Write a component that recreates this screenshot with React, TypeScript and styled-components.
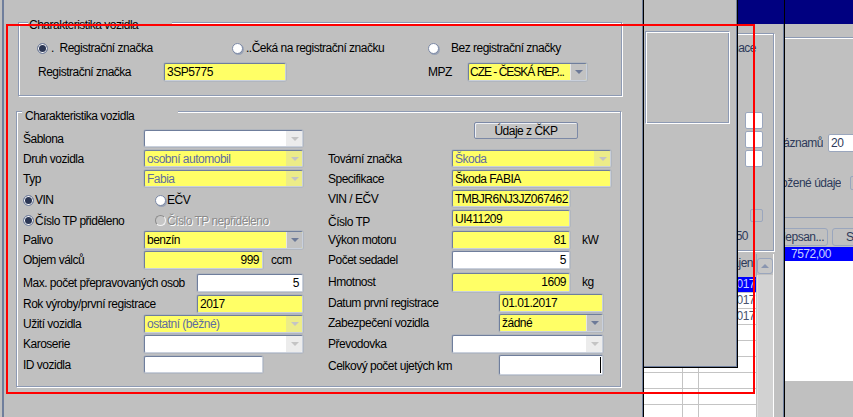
import React from "react";
import styled, { createGlobalStyle } from "styled-components";

const YELLOW = "#ffff66";
const EDGE = "#6f7e9c";
const NAVY = "#000080";

const GlobalStyle = createGlobalStyle`
  * { box-sizing: border-box; }
  html, body {
    margin: 0;
    padding: 0;
    background: #c0c0c0;
  }
  body {
    width: 853px;
    height: 417px;
    overflow: hidden;
    font-family: "Liberation Sans", Arial, sans-serif;
    font-size: 12px;
    letter-spacing: -0.5px;
    color: #000;
  }
`;

const Desktop = styled.div`
  position: relative;
  display: flex;
  width: 853px;
  height: 417px;
  overflow: hidden;
  background: #c0c0c0;
`;

/* ---------- main dialog ---------- */

const MainDialog = styled.div`
  flex: none;
  width: 644px;
  height: 100%;
  padding: 22px 0 0 16px;
  border-left: 2px solid #c0c0c0;
  border-right: 1px solid #000;
  box-shadow: inset 2px 0 0 ${EDGE}, inset -1px 0 0 ${EDGE};
`;

const Frame = styled.section<{ $w: number; $h: number; $ml?: number; $mt?: number }>`
  position: relative;
  width: ${(p) => p.$w}px;
  height: ${(p) => p.$h}px;
  margin-left: ${(p) => p.$ml ?? 0}px;
  margin-top: ${(p) => p.$mt ?? 0}px;
  border: 1px solid #8d9ab4;
  box-shadow: inset 1px 1px 0 #fff, 1px 1px 0 #fff;
`;

const Legend = styled.span<{ $left: number; $top: number; $w: number; $pad: number }>`
  position: absolute;
  left: ${(p) => p.$left}px;
  top: ${(p) => p.$top}px;
  width: ${(p) => p.$w}px;
  padding-left: ${(p) => p.$pad}px;
  line-height: 14px;
  background: #c0c0c0;
  white-space: nowrap;
`;

const PlateBody = styled.div`
  display: flex;
  flex-direction: column;
  padding: 18px 0 0 18px;
`;

const Line = styled.div<{ $h: number; $mt?: number }>`
  display: flex;
  align-items: center;
  height: ${(p) => p.$h}px;
  margin-top: ${(p) => p.$mt ?? 0}px;
`;

const RadioOption = styled.label<{ $w?: number; $gap: number; $disabled?: boolean }>`
  flex: none;
  display: flex;
  align-items: center;
  gap: ${(p) => p.$gap}px;
  width: ${(p) => (p.$w ? `${p.$w}px` : "auto")};
  white-space: pre;
  color: ${(p) => (p.$disabled ? "#8a8a8a" : "#000")};
  text-shadow: ${(p) => (p.$disabled ? "1px 1px 0 #fff" : "none")};
`;

const RadioDot = styled.span<{ $checked?: boolean; $disabled?: boolean }>`
  flex: none;
  width: 11px;
  height: 11px;
  border-radius: 50%;
  border: 1px solid;
  border-color: ${(p) =>
    p.$disabled ? "#8c8c8c #f4f4f4 #f4f4f4 #8c8c8c" : "#7c89a6"};
  background: ${(p) => (p.$checked ? "#2b3654" : p.$disabled ? "#c6c6c6" : "#fff")};
  box-shadow: ${(p) =>
    p.$checked ? "inset 0 0 0 1px #fff" : p.$disabled ? "none" : "1px 1px 0 #9aa3b5"};
`;

const Label = styled.span<{ $w: number; $pl?: number; $ml?: number; $self?: string }>`
  flex: none;
  width: ${(p) => p.$w}px;
  padding-left: ${(p) => p.$pl ?? 0}px;
  margin-left: ${(p) => p.$ml ?? 0}px;
  line-height: 18px;
  white-space: nowrap;
  align-self: ${(p) => p.$self ?? "auto"};
`;

const Unit = styled.span<{ $gap: number }>`
  margin-left: ${(p) => p.$gap}px;
  line-height: 18px;
`;

const FieldBox = styled.div<{ $w: number; $h?: number; $tone?: "yellow" | "white"; $ml?: number }>`
  flex: none;
  display: flex;
  align-items: stretch;
  width: ${(p) => p.$w}px;
  height: ${(p) => p.$h ?? 18}px;
  margin-left: ${(p) => p.$ml ?? 0}px;
  border: 1px solid;
  border-color: #6f7e9c #c9d0dc #c9d0dc #6f7e9c;
  border-radius: 2px;
  box-shadow: 0 0 0 1px rgba(150, 162, 186, 0.35);
  background: ${(p) => (p.$tone === "yellow" ? YELLOW : "#fff")};
  overflow: hidden;
`;

const FieldText = styled.span<{ $align?: "left" | "right"; $muted?: boolean; $tight?: boolean }>`
  flex: 1;
  min-width: 0;
  padding: 0 3px 0 ${(p) => (p.$tight ? 1 : 2)}px;
  line-height: 16px;
  letter-spacing: ${(p) => (p.$tight ? "-1px" : "inherit")};
  text-align: ${(p) => p.$align ?? "left"};
  color: ${(p) => (p.$muted ? "#5f6da0" : "#000")};
  white-space: nowrap;
  overflow: hidden;
`;

const Caret = styled.span`
  flex: none;
  width: 1px;
  margin: 1px 1px 1px 0;
  background: #000;
`;

const DropButton = styled.span<{ $disabled?: boolean }>`
  flex: none;
  width: 16px;
  display: flex;
  align-items: center;
  justify-content: center;
  background: ${(p) => (p.$disabled ? "rgba(200,200,200,0.35)" : "#c2c2c2")};
  border-left: 1px solid ${(p) => (p.$disabled ? "transparent" : "#e6e6e6")};

  &::after {
    content: "";
    border-left: 4px solid transparent;
    border-right: 4px solid transparent;
    border-top: 4px solid ${(p) => (p.$disabled ? "#c4c4c4" : "#6d7a98")};
  }
`;

type FieldProps = {
  w: number;
  value?: string;
  tone?: "yellow" | "white";
  align?: "left" | "right";
  h?: number;
  ml?: number;
  caret?: boolean;
  tight?: boolean;
};

const TextField = ({ w, value = "", tone = "white", align, h, ml, caret }: FieldProps) => (
  <FieldBox $w={w} $tone={tone} $h={h} $ml={ml}>
    <FieldText $align={align}>{value}</FieldText>
    {caret && <Caret />}
  </FieldBox>
);

const Combo = ({
  w,
  value = "",
  tone = "white",
  disabled,
  h,
  tight,
}: FieldProps & { disabled?: boolean }) => (
  <FieldBox $w={w} $tone={tone} $h={h}>
    <FieldText $muted={disabled} $tight={tight}>
      {value}
    </FieldText>
    <DropButton $disabled={disabled} />
  </FieldBox>
);

const FormBody = styled.div`
  display: flex;
  padding-left: 6px;
`;

const Column = styled.div<{ $w?: number; $pt: number }>`
  display: flex;
  flex-direction: column;
  flex: ${(p) => (p.$w ? "none" : "1")};
  width: ${(p) => (p.$w ? `${p.$w}px` : "auto")};
  padding-top: ${(p) => p.$pt}px;
`;

const Row = styled.div<{ $h: number }>`
  display: flex;
  align-items: flex-start;
  height: ${(p) => p.$h}px;
`;

const RadioRow = styled.div<{ $h: number }>`
  display: flex;
  align-items: center;
  height: ${(p) => p.$h}px;
`;

const ButtonRow = styled.div`
  height: 28px;
  padding-left: 146px;
`;

const PushButton = styled.button`
  width: 104px;
  height: 17px;
  padding: 0;
  font: inherit;
  letter-spacing: inherit;
  line-height: 14px;
  color: #000;
  background: #c4c4c4;
  border: 1px solid #7c89a6;
  border-radius: 2px;
  box-shadow: inset 1px 1px 0 #eef0f4;
`;

/* ---------- windows behind ---------- */

const BackWindow = styled.div`
  position: relative;
  flex: none;
  width: 141px;
  height: 100%;
  display: flex;
  flex-direction: column;
  border-right: 1px solid #000;
  box-shadow: inset -1px 0 0 ${EDGE};
`;

const TitleBar = styled.div`
  flex: none;
  height: 24px;
  background: ${NAVY};
`;

const BackBody = styled.div`
  display: flex;
  flex-direction: column;
  padding-left: 10px;
`;

const SideFrame = styled.div`
  width: 120px;
  height: 218px;
  margin-top: 9px;
  display: flex;
  flex-direction: column;
  align-items: flex-end;
  border: 1px solid #8d9ab4;
  box-shadow: inset 1px 1px 0 #fff, 1px 1px 0 #fff;
`;

const DimText = styled.span<{ $mt: number; $mr: number }>`
  margin-top: ${(p) => p.$mt}px;
  margin-right: ${(p) => p.$mr}px;
  line-height: 14px;
  color: #2e3a5a;
  white-space: nowrap;
`;

const SmallBox = styled.span<{ $w: number; $h: number; $mt: number; $mr: number; $tone?: string }>`
  width: ${(p) => p.$w}px;
  height: ${(p) => p.$h}px;
  margin-top: ${(p) => p.$mt}px;
  margin-right: ${(p) => p.$mr}px;
  background: ${(p) => p.$tone ?? "#fff"};
  border: 1px solid #9aa6bd;
  border-radius: 2px;
`;

const TableWrap = styled.div`
  display: flex;
  margin-top: 3px;
  margin-left: -10px;
  flex: 1;
`;

const Grid = styled.div`
  width: 113px;
  display: flex;
  flex-direction: column;
`;

const GridHead = styled.div`
  height: 23px;
  display: flex;
  align-items: center;
  justify-content: flex-end;
  padding: 0 3px 3px 0;
  border-bottom: 2px solid #c0c0c0;
  border-right: 1px solid #9aa6bd;
  color: #2e3a5a;
`;

const GridBody = styled.div`
  flex: 1;
  background: #fff;
`;

const GridRow = styled.div<{ $selected?: boolean }>`
  display: grid;
  grid-template-columns: 39px 16px 58px;
  height: 16px;
  background: ${(p) => (p.$selected ? "#0000ff" : "transparent")};
  color: ${(p) => (p.$selected ? "#c8d2ff" : "#4a5570")};
`;

const GridCell = styled.span<{ $align?: string }>`
  border-right: 1px solid #c4c4c4;
  border-bottom: 1px solid #c4c4c4;
  line-height: 15px;
  text-align: ${(p) => p.$align ?? "left"};
  padding-right: 1px;
  white-space: nowrap;
  overflow: hidden;
`;

const ScrollBar = styled.div`
  width: 17px;
  display: flex;
  flex-direction: column;
  padding-top: 4px;
  border-right: 1px solid #fff;
`;

const ScrollUp = styled.span`
  flex: none;
  height: 16px;
  display: flex;
  align-items: center;
  justify-content: center;
  border: 1px solid #9aa6bd;
  border-radius: 3px;
  background: #c6c6c6;

  &::after {
    content: "";
    border-left: 4px solid transparent;
    border-right: 4px solid transparent;
    border-bottom: 4px solid #8a96b0;
  }
`;

const ScrollTrack = styled.span`
  flex: 1;
  margin-top: 1px;
  background: #d2d2d2;
  border-left: 1px solid #e0e0e0;
`;

const FloatPanel = styled.div`
  position: absolute;
  left: 0;
  top: 0;
  width: 94px;
  height: 368px;
  padding: 31px 0 0 1px;
  background: #c0c0c0;
  border-right: 1px solid #000;
  border-bottom: 1px solid #000;
  box-shadow: inset -1px -1px 0 ${EDGE};
`;

const EtchedBox = styled.div`
  width: 85px;
  height: 93px;
  border: 1px solid #8d9ab4;
  border-color: #8d9ab4 #fff #fff #8d9ab4;
  box-shadow: inset 1px 1px 0 #fff, inset -1px -1px 0 #8d9ab4;
`;

const RightWindow = styled.div`
  flex: 1;
  display: flex;
  flex-direction: column;
  min-width: 0;
`;

const RightBody = styled.div`
  flex: 1;
  display: flex;
  flex-direction: column;
  overflow: hidden;
`;

const TopRule = styled.div`
  margin-top: 13px;
  height: 181px;
  border-top: 1px solid #8d9ab4;
  box-shadow: inset 0 1px 0 #fff;
  border-bottom: 1px solid #8d9ab4;
  display: flex;
  flex-direction: column;
`;

const ClipLine = styled.div<{ $mt: number }>`
  display: flex;
  align-items: center;
  height: 18px;
  margin-top: ${(p) => p.$mt}px;
  white-space: nowrap;
`;

const ClipLabel = styled.span<{ $w: number }>`
  flex: none;
  width: ${(p) => p.$w}px;
  display: flex;
  justify-content: flex-end;
  overflow: hidden;
  color: #2e3a5a;
  line-height: 18px;
`;

const MiniInput = styled.span<{ $ml: number }>`
  flex: none;
  width: 60px;
  height: 18px;
  margin-left: ${(p) => p.$ml}px;
  padding-left: 2px;
  line-height: 16px;
  background: #fff;
  color: #2e3a5a;
  border: 1px solid #9aa6bd;
  border-radius: 2px;
`;

const MiniCheck = styled.span<{ $ml: number }>`
  flex: none;
  width: 14px;
  height: 14px;
  margin-left: ${(p) => p.$ml}px;
  border: 1px solid #9aa6bd;
  border-radius: 2px;
`;

const TabStrip = styled.div`
  display: flex;
  gap: 4px;
  height: 18px;
  margin-top: 10px;
  white-space: nowrap;
`;

const TabClip = styled.div`
  flex: none;
  width: 43px;
  display: flex;
  justify-content: flex-end;
  overflow: hidden;
`;

const TabButton = styled.span<{ $w: number; $align: "left" | "right"; $pl: number }>`
  flex: none;
  width: ${(p) => p.$w}px;
  height: 18px;
  padding: 0 3px 0 ${(p) => p.$pl}px;
  line-height: 16px;
  text-align: ${(p) => p.$align};
  color: #2e3a5a;
  border: 1px solid #9aa6bd;
  border-radius: 3px;
  overflow: hidden;
`;

const ResultTable = styled.div`
  height: 134px;
  margin-top: 1px;
  background: #fff;
`;

const SelectedRow = styled.div`
  height: 14px;
  padding-left: 6px;
  line-height: 14px;
  background: #0000ff;
  color: #c8d2ff;
`;

const Annotation = styled.div`
  position: absolute;
  left: 6px;
  top: 24px;
  width: 749px;
  height: 370px;
  border: 2px solid #ff0000;
  pointer-events: none;
`;

export default function App() {
  return (
    <>
      <GlobalStyle />
      <Desktop>
        <MainDialog>
          <Frame $w={604} $h={74}>
            <Legend $left={9} $top={-5} $w={144} $pad={1}>
              Charakteristika vozidla
            </Legend>
            <PlateBody>
              <Line $h={14}>
                <RadioOption $w={195} $gap={3}>
                  <RadioDot $checked />
                  {".  Registrační značka"}
                </RadioOption>
                <RadioOption $w={196} $gap={3}>
                  <RadioDot />
                  ..Čeká na registrační značku
                </RadioOption>
                <RadioOption $gap={12}>
                  <RadioDot />
                  Bez registrační značky
                </RadioOption>
              </Line>
              <Line $h={18} $mt={8}>
                <Label $w={127} $pl={1}>
                  Registrační značka
                </Label>
                <TextField w={122} tone="yellow" value="3SP5775" />
                <Label $w={40} $ml={142}>
                  MPZ
                </Label>
                <Combo w={119} tone="yellow" value="CZE - ČESKÁ REP..." tight />
              </Line>
            </PlateBody>
          </Frame>

          <Frame $w={605} $h={276} $ml={-2} $mt={15}>
            <Legend $left={5} $top={-3} $w={156} $pad={3}>
              Charakteristika vozidla
            </Legend>
            <FormBody>
              <Column $w={305} $pt={18}>
                <Row $h={20}>
                  <Label $w={121}>Šablona</Label>
                  <Combo w={159} h={17} disabled />
                </Row>
                <Row $h={20}>
                  <Label $w={121}>Druh vozidla</Label>
                  <Combo w={159} h={17} tone="yellow" value="osobní automobil" disabled />
                </Row>
                <Row $h={20}>
                  <Label $w={121}>Typ</Label>
                  <Combo w={159} h={17} tone="yellow" value="Fabia" disabled />
                </Row>
                <RadioRow $h={20}>
                  <RadioOption $w={132} $gap={1}>
                    <RadioDot $checked />
                    VIN
                  </RadioOption>
                  <RadioOption $gap={1}>
                    <RadioDot />
                    EČV
                  </RadioOption>
                </RadioRow>
                <RadioRow $h={21}>
                  <RadioOption $w={132} $gap={1}>
                    <RadioDot $checked />
                    Číslo TP přiděleno
                  </RadioOption>
                  <RadioOption $gap={1} $disabled>
                    <RadioDot $disabled />
                    Číslo TP nepřiděleno
                  </RadioOption>
                </RadioRow>
                <Row $h={20}>
                  <Label $w={121}>Palivo</Label>
                  <Combo w={159} tone="yellow" value="benzín" />
                </Row>
                <Row $h={23}>
                  <Label $w={121}>Objem válců</Label>
                  <TextField w={119} tone="yellow" align="right" value="999" />
                  <Unit $gap={8}>ccm</Unit>
                </Row>
                <Row $h={21}>
                  <Label $w={174}>Max. počet přepravovaných osob</Label>
                  <TextField w={106} align="right" value="5" />
                </Row>
                <Row $h={20}>
                  <Label $w={174}>Rok výroby/první registrace</Label>
                  <TextField w={106} tone="yellow" value="2017" />
                </Row>
                <Row $h={20}>
                  <Label $w={121}>Užití vozidla</Label>
                  <Combo w={159} tone="yellow" value="ostatní (běžné)" disabled />
                </Row>
                <Row $h={21}>
                  <Label $w={121}>Karoserie</Label>
                  <Combo w={159} disabled />
                </Row>
                <Row $h={20}>
                  <Label $w={121}>ID vozidla</Label>
                  <TextField w={119} h={17} />
                </Row>
              </Column>

              <Column $pt={10}>
                <ButtonRow>
                  <PushButton type="button">Údaje z ČKP</PushButton>
                </ButtonRow>
                <Row $h={20}>
                  <Label $w={124}>Tovární značka</Label>
                  <Combo w={159} h={17} tone="yellow" value="Škoda" disabled />
                </Row>
                <Row $h={20}>
                  <Label $w={124}>Specifikace</Label>
                  <TextField w={159} h={17} tone="yellow" value="Škoda FABIA" />
                </Row>
                <Row $h={20}>
                  <Label $w={124}>VIN / EČV</Label>
                  <TextField w={118} h={17} tone="yellow" value="TMBJR6NJ3JZ067462" />
                </Row>
                <Row $h={21}>
                  <Label $w={124} $self="flex-end">
                    Číslo TP
                  </Label>
                  <TextField w={118} h={17} tone="yellow" value="UI411209" />
                </Row>
                <Row $h={20}>
                  <Label $w={124}>Výkon motoru</Label>
                  <TextField w={118} tone="yellow" align="right" value="81" />
                  <Unit $gap={12}>kW</Unit>
                </Row>
                <Row $h={22}>
                  <Label $w={124}>Počet sedadel</Label>
                  <TextField w={118} align="right" value="5" />
                </Row>
                <Row $h={21}>
                  <Label $w={124}>Hmotnost</Label>
                  <TextField w={118} h={19} tone="yellow" align="right" value="1609" />
                  <Unit $gap={12}>kg</Unit>
                </Row>
                <Row $h={20}>
                  <Label $w={171}>Datum první registrace</Label>
                  <TextField w={104} tone="yellow" value="01.01.2017" />
                </Row>
                <Row $h={21}>
                  <Label $w={171}>Zabezpečení vozidla</Label>
                  <Combo w={104} tone="yellow" value="žádné" />
                </Row>
                <Row $h={20}>
                  <Label $w={124}>Převodovka</Label>
                  <Combo w={151} disabled />
                </Row>
                <Row $h={20}>
                  <Label $w={171} $self="flex-end">
                    Celkový počet ujetých km
                  </Label>
                  <TextField w={104} h={20} caret />
                </Row>
              </Column>
            </FormBody>
          </Frame>
        </MainDialog>

        <BackWindow>
          <TitleBar />
          <BackBody>
            <SideFrame>
              <DimText $mt={7} $mr={17}>
                Informace
              </DimText>
              <SmallBox $w={18} $h={17} $mt={57} $mr={10} />
              <SmallBox $w={18} $h={17} $mt={2} $mr={10} />
              <SmallBox $w={18} $h={17} $mt={2} $mr={10} />
              <SmallBox $w={13} $h={13} $mt={42} $mr={10} $tone="transparent" />
              <DimText $mt={7} $mr={25}>
                150
              </DimText>
            </SideFrame>
            <TableWrap>
              <Grid>
                <GridHead>Zahájen</GridHead>
                <GridBody>
                  <GridRow $selected>
                    <GridCell />
                    <GridCell />
                    <GridCell $align="right">01.01.2017</GridCell>
                  </GridRow>
                  <GridRow>
                    <GridCell />
                    <GridCell />
                    <GridCell $align="right">01.01.2017</GridCell>
                  </GridRow>
                  <GridRow>
                    <GridCell />
                    <GridCell />
                    <GridCell $align="right">01.01.2017</GridCell>
                  </GridRow>
                  {Array.from({ length: 7 }, (_, i) => (
                    <GridRow key={i}>
                      <GridCell />
                      <GridCell />
                      <GridCell />
                    </GridRow>
                  ))}
                </GridBody>
              </Grid>
              <ScrollBar>
                <ScrollUp />
                <ScrollTrack />
              </ScrollBar>
            </TableWrap>
          </BackBody>
          <FloatPanel>
            <EtchedBox />
          </FloatPanel>
        </BackWindow>

        <RightWindow>
          <TitleBar />
          <RightBody>
            <TopRule>
              <ClipLine $mt={96}>
                <ClipLabel $w={38}>Počet záznamů</ClipLabel>
                <MiniInput $ml={5}>20</MiniInput>
              </ClipLine>
              <ClipLine $mt={22}>
                <ClipLabel $w={56}>Uložené údaje</ClipLabel>
                <MiniCheck $ml={9} />
              </ClipLine>
            </TopRule>
            <TabStrip>
              <TabClip>
                <TabButton $w={70} $align="right" $pl={3}>
                  Odepsan...
                </TabButton>
              </TabClip>
              <TabButton $w={60} $align="left" $pl={13}>
                Stav
              </TabButton>
            </TabStrip>
            <ResultTable>
              <SelectedRow>7572,00</SelectedRow>
            </ResultTable>
          </RightBody>
        </RightWindow>

        <Annotation />
      </Desktop>
    </>
  );
}
